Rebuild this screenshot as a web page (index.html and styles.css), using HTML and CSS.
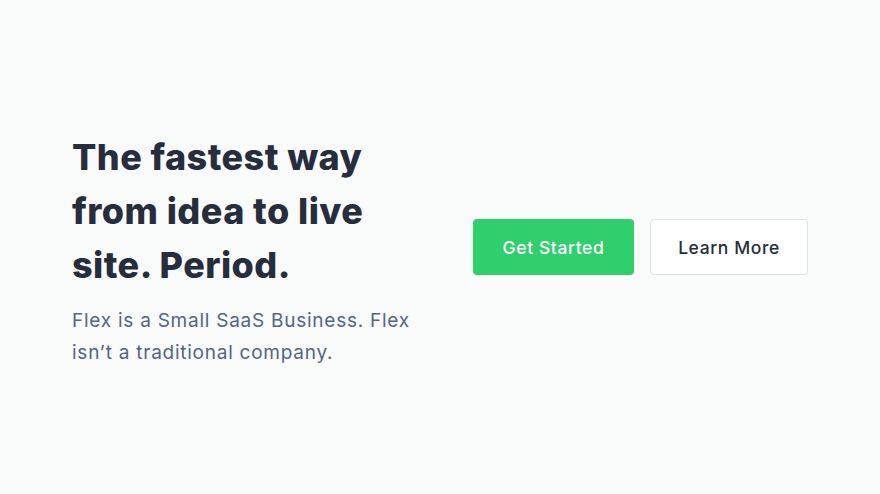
FILE: index.html
```html
<!DOCTYPE html>
<html lang="en">
<head>
<meta charset="utf-8">
<title>Flex</title>
<link rel="stylesheet" href="styles.css">
</head>
<body>
<section class="hero">
  <div class="hero-text">
    <h1 class="hero-title">The fastest way<br>from idea to live<br>site. Period.</h1>
    <p class="hero-lead">Flex is a Small SaaS Business. Flex<br>isn’t a traditional company.</p>
  </div>
  <div class="hero-actions">
    <a class="btn btn-primary" href="#">Get Started</a>
    <a class="btn btn-outline" href="#">Learn More</a>
  </div>
</section>
</body>
</html>
```
FILE: styles.css
```css
* { box-sizing: border-box; }
html, body { margin: 0; padding: 0; }
body {
  background: #f9fafa;
  font-family: "Inter", "Open Sans", sans-serif;
  width: 880px;
  height: 494px;
  overflow: hidden;
}
.hero {
  display: flex;
  align-items: center;
  height: 494px;
  padding: 4px 72px 0 72px;
}
.hero-text {
  flex: 0 0 401px;
}
.hero-title {
  margin: 0;
  font-size: 36px;
  line-height: 54px;
  font-weight: 800;
  color: #262d3d;
  letter-spacing: 0.45px;
}
.hero-lead {
  margin: 13px 0 0;
  font-size: 19px;
  line-height: 32px;
  color: #536586;
  font-weight: 400;
  letter-spacing: 0.75px;
}
.hero-actions {
  display: flex;
  gap: 16px;
  margin-top: -4px;
}
.btn {
  display: flex;
  align-items: center;
  justify-content: center;
  height: 56px;
  border-radius: 4px;
  font-size: 17.5px;
  letter-spacing: 0.6px;
  text-decoration: none;
  font-weight: 500;
}
.btn-primary {
  width: 161px;
  background: #2ecf6c;
  color: #ffffff;
}
.btn-outline {
  width: 158px;
  background: #ffffff;
  color: #262d3d;
  border: 1px solid #dcdfe3;
}
```
